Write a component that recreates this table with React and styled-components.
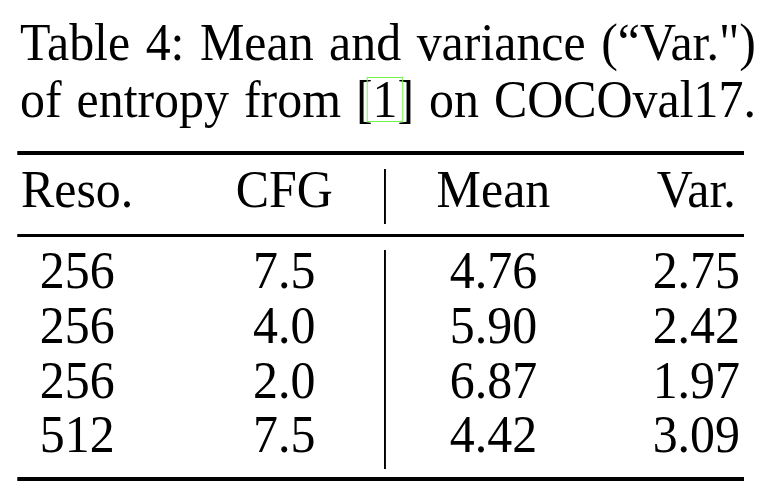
import React from 'react';
import styled, { createGlobalStyle } from 'styled-components';

const Global = createGlobalStyle`
  html, body { margin: 0; padding: 0; background: #fff; overflow: hidden; }
  body {
    font-family: "Liberation Serif", "Times New Roman", serif;
    color: #000;
    font-kerning: normal;
  }
`;

/* The reference Times is a touch narrower than Liberation Serif at the same
   height: lay out at 52px and squeeze the sheet slightly. */
const SQUEEZE = 0.96;

const Page = styled.div`
  width: 770px;
  height: 494px;
  overflow: hidden;
`;

const Sheet = styled.div`
  width: ${770 / SQUEEZE}px;
  box-sizing: border-box;
  padding-top: 13.95px;
  display: flex;
  flex-direction: column;
  transform: scaleX(${SQUEEZE});
  transform-origin: 0 0;
`;

const Caption = styled.p`
  margin: 0 0 0 ${20 / SQUEEZE}px;
  width: ${736 / SQUEEZE}px;
  font-size: 52px;
  line-height: 57px;
  white-space: nowrap;
  text-align: justify;
  text-align-last: justify;
`;

const Cite = styled.span`
  position: relative;
  &::after {
    content: '';
    position: absolute;
    left: ${-6 / SQUEEZE}px;
    right: ${-5.5 / SQUEEZE}px;
    top: 6.3px;
    bottom: 6.2px;
    border: 1.5px solid #72f54a;
  }
`;

const Table = styled.div`
  margin: 23.05px 0 0 ${17 / SQUEEZE}px;
  width: ${727 / SQUEEZE}px;
  box-sizing: border-box;
  border-top: 4px solid #000;
  border-bottom: 4px solid #000;
  padding: 14px 0 8px;
  display: grid;
  grid-template-columns:
    [reso] auto 2fr [cfg] auto 1fr [rule] ${1.5 / SQUEEZE}px 1fr
    [mean] auto 2fr [var] auto;
  font-size: 52px;
`;

const Row = styled.div`
  display: contents;
`;

const Cell = styled.div`
  grid-column: ${(p) => p.$col};
  padding: 0 ${4 / SQUEEZE}px 13.2px;
  line-height: 41.5px;
  text-align: center;
  white-space: nowrap;
`;

const Divider = styled.div`
  grid-column: rule;
  background: #000;
`;

const MidRule = styled.div`
  grid-column: 1 / -1;
  height: 3px;
  background: #000;
  margin: 10px 0 13.7px;
`;

const cols = ['reso', 'cfg', 'mean', 'var'];
const header = ['Reso.', 'CFG', 'Mean', 'Var.'];
const rows = [
  ['256', '7.5', '4.76', '2.75'],
  ['256', '4.0', '5.90', '2.42'],
  ['256', '2.0', '6.87', '1.97'],
  ['512', '7.5', '4.42', '3.09'],
];

function TableRow({ values }) {
  return (
    <Row>
      {values.map((v, i) => (
        <React.Fragment key={i}>
          {i === 2 && <Divider />}
          <Cell $col={cols[i]}>{v}</Cell>
        </React.Fragment>
      ))}
    </Row>
  );
}

export default function App() {
  return (
    <>
      <Global />
      <Page>
        <Sheet>
          <Caption>
            Table 4: Mean and variance (“Var.")
            <br />
            of entropy from [<Cite>1</Cite>] on COCOval17.
          </Caption>
          <Table>
            <TableRow values={header} />
            <MidRule />
            {rows.map((r, i) => (
              <TableRow key={i} values={r} />
            ))}
          </Table>
        </Sheet>
      </Page>
    </>
  );
}
